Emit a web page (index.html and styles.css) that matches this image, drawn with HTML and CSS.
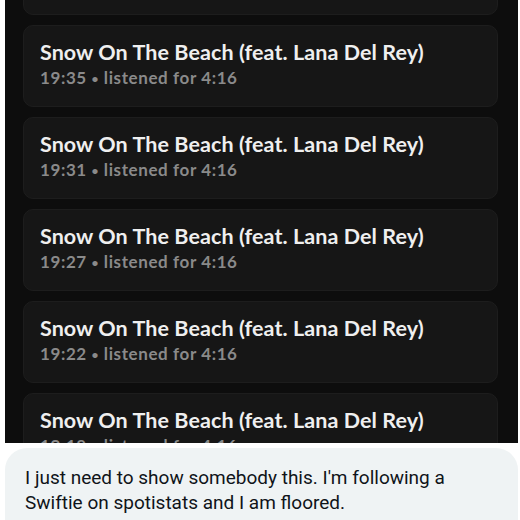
FILE: index.html
```html
<!DOCTYPE html>
<html>
<head>
<meta charset="utf-8">
<link rel="stylesheet" href="styles.css">
</head>
<body>
<div class="page">
  <div class="shot">
    <div class="list">
      <div class="card"></div>
      <div class="card">
        <div class="title">Snow On The Beach (feat. Lana Del Rey)</div>
        <div class="meta">19:35 <span class="dot">•</span> listened for 4:16</div>
      </div>
      <div class="card">
        <div class="title">Snow On The Beach (feat. Lana Del Rey)</div>
        <div class="meta">19:31 <span class="dot">•</span> listened for 4:16</div>
      </div>
      <div class="card">
        <div class="title">Snow On The Beach (feat. Lana Del Rey)</div>
        <div class="meta">19:27 <span class="dot">•</span> listened for 4:16</div>
      </div>
      <div class="card">
        <div class="title">Snow On The Beach (feat. Lana Del Rey)</div>
        <div class="meta">19:22 <span class="dot">•</span> listened for 4:16</div>
      </div>
      <div class="card">
        <div class="title">Snow On The Beach (feat. Lana Del Rey)</div>
        <div class="meta">19:18 <span class="dot">•</span> listened for 4:16</div>
      </div>
    </div>
  </div>
  <div class="bubble">
    <p>I just need to show somebody this. I'm following a Swiftie on spotistats and I am floored.</p>
  </div>
</div>
</body>
</html>
```
FILE: styles.css
```css
html, body {
  margin: 0;
  padding: 0;
  background: #ffffff;
}
.page {
  width: 520px;
  height: 520px;
  padding: 0 2px 0 5px;
  box-sizing: border-box;
  display: flex;
  flex-direction: column;
  gap: 5px;
}
.shot {
  height: 443px;
  flex: none;
  background: #0d0d0d;
  overflow: hidden;
  padding: 0 20px 0 18px;
}
.list {
  margin-top: -67px;
  display: flex;
  flex-direction: column;
  gap: 10px;
}
.card {
  height: 82px;
  box-sizing: border-box;
  background: #161616;
  border: 1px solid #1d1d1d;
  border-radius: 10px;
  padding: 13px 0 0 16px;
}
.title {
  font-family: "Lato", sans-serif;
  font-weight: 700;
  font-size: 21.5px;
  line-height: 26px;
  letter-spacing: 0.08px;
  color: #efefef;
  white-space: nowrap;
}
.meta {
  font-family: "Lato", sans-serif;
  font-weight: 700;
  font-size: 17px;
  line-height: 20px;
  letter-spacing: 0.6px;
  color: #8a8a8a;
  margin-top: 3px;
  white-space: nowrap;
}
.dot {
  font-size: 12px;
  vertical-align: 1px;
}
.bubble {
  flex: 1;
  background: #eff3f4;
  border-radius: 22px 22px 0 0;
  padding: 17px 20px 0 20px;
}
.bubble p {
  margin: 0;
  font-family: "Roboto", sans-serif;
  font-size: 19px;
  line-height: 25px;
  color: #0f1419;
}
```
